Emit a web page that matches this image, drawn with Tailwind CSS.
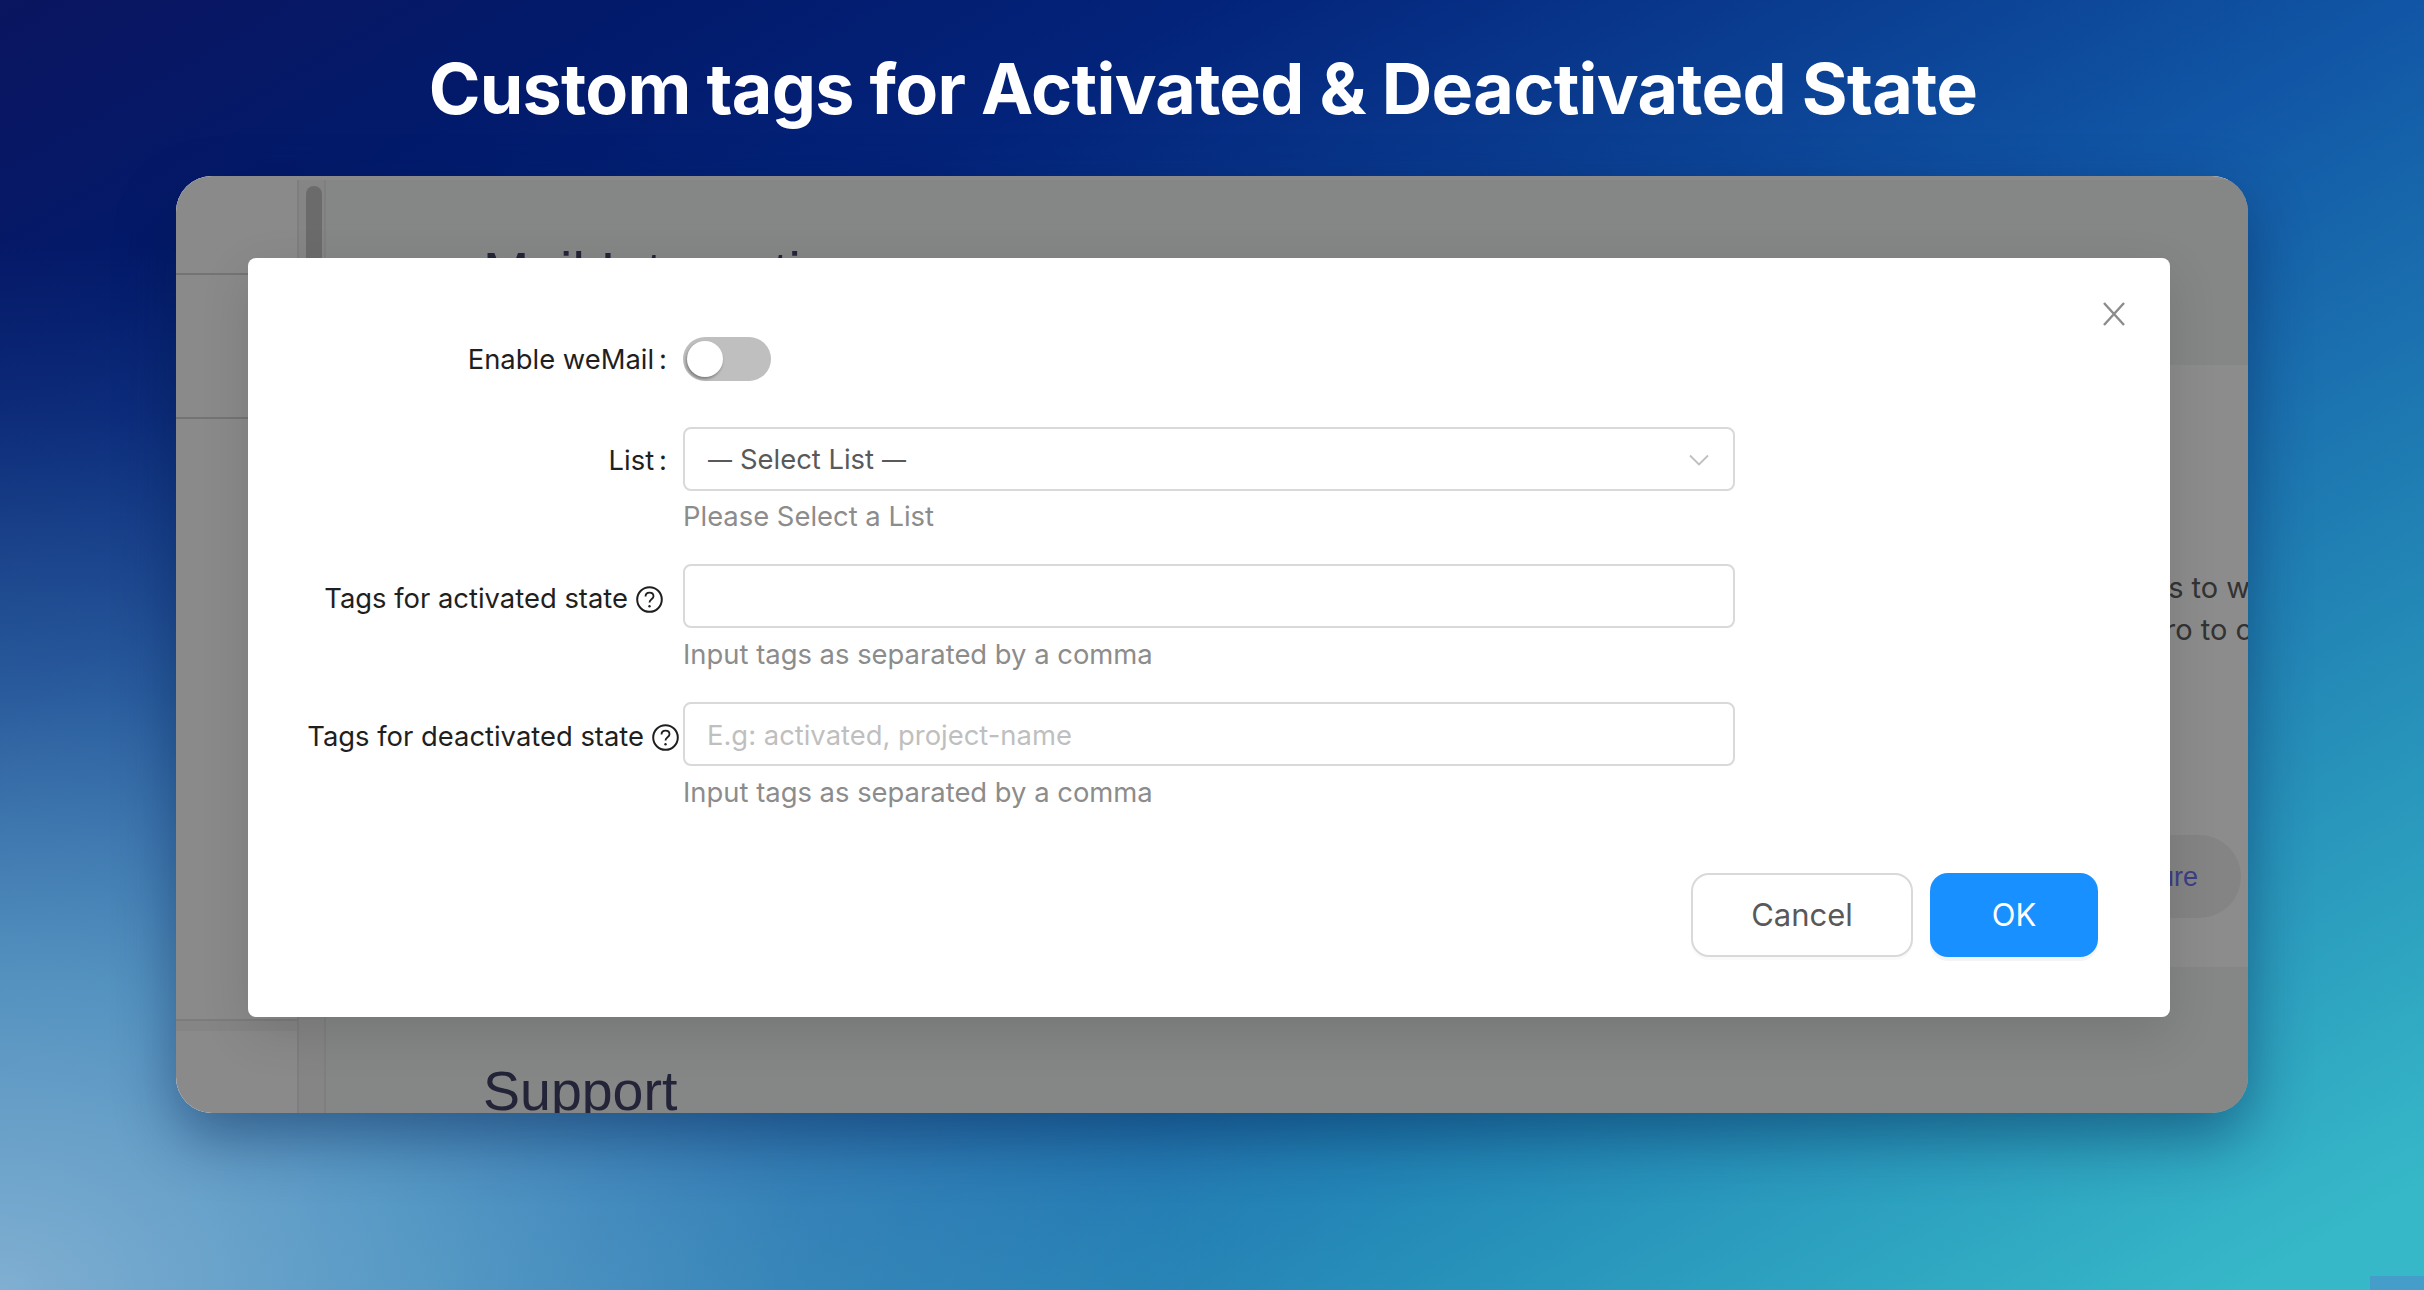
<!DOCTYPE html>
<html lang="en">
<head>
    <meta charset="UTF-8">
    <meta name="viewport" content="width=device-width, initial-scale=1.0">
    <title>Custom tags for Activated &amp; Deactivated State</title>
    <script src="https://cdn.jsdelivr.net/npm/@tailwindcss/browser@4"></script>
</head>
<body class="font-['Inter',sans-serif] overflow-hidden">
    <div class="relative w-[2424px] h-[1290px] overflow-hidden flex flex-col items-center bg-[radial-gradient(ellipse_1400px_1050px_at_0%_100%,rgba(134,180,212,0.95)_0%,rgba(105,170,205,0.78)_30%,rgba(85,155,195,0.45)_58%,rgba(70,130,185,0.15)_84%,rgba(70,130,185,0)_100%),linear-gradient(150deg,#0b1560_0%,#021a6b_14%,#03237a_26%,#1156a6_52%,#2387b6_74%,#36b8c8_96%)]">
        <h1 class="mt-[44px] mr-[18px] h-[90px] leading-[90px] text-[70px] font-bold text-white whitespace-nowrap tracking-[-0.72px]">Custom tags for Activated &amp; Deactivated State</h1>

        <!-- app window, dimmed by the modal mask -->
        <div class="relative mt-[42px] w-[2072px] h-[937px] rounded-[36px] bg-[#f3f4f5] overflow-hidden flex flex-col shadow-[0_24px_60px_rgba(0,25,70,0.45)]">
            <div class="h-[4px] shrink-0 bg-[#fbfbfb]"></div>
            <div class="flex-1 min-h-0 flex">
                <aside class="w-[123px] shrink-0 bg-[#fbfbfb] border-r-2 border-[#e6e6e6] flex flex-col">
                    <div class="h-[95px] border-b-2 border-[#d4d4d4]"></div>
                    <div class="h-[144px] border-b-2 border-[#d4d4d4]"></div>
                    <div class="flex-1"></div>
                    <div class="h-[94px] border-t-2 border-[#e2e2e2]"><div class="h-[10px] bg-[#f2f2f2]"></div></div>
                </aside>
                <div class="w-[27px] shrink-0 bg-[#f3f3f3] border-r-2 border-[#e8e8e8] pt-[6px] pl-[7px]">
                    <div class="w-[16px] h-[120px] rounded-full bg-[#c4c4c4]"></div>
                </div>
                <main class="flex-1 min-w-0 pl-[157px] pt-[57px] flex flex-col">
                    <h2 class="h-[70px] leading-[70px] text-[55.5px] font-['Liberation_Sans',sans-serif] text-[#434369] whitespace-nowrap">Mail Integration</h2>
                    <div class="mt-[58px] -ml-[1px] h-[602px] shrink-0 bg-white pt-[202px] text-[29px] leading-[42px] text-[#5d5d5d] whitespace-nowrap relative">
                        <p class="text-right mr-[-75px]">Add tags to subscribers to weMail</p>
                        <p class="text-right mr-[-128px]">Upgrade to Pro to customize</p>
                        <div class="absolute right-[7px] top-[470px] h-[83px] w-[200px] rounded-full bg-[#f1f1f3] flex items-center justify-end pr-[43px] font-['Liberation_Sans',sans-serif] text-[27px] text-[#6e72f0]">Configure</div>
                    </div>
                    <h2 class="mt-[89px] leading-[70px] text-[55.5px] font-['Liberation_Sans',sans-serif] text-[#434369]">Support</h2>
                </main>
            </div>
            <div class="absolute inset-0 bg-black/45"></div>
        </div>

        <!-- modal -->
        <div class="absolute left-[248px] top-[258px] w-[1922px] h-[759px] bg-white rounded-[8px] pt-[79px] pr-[72px] text-[27.4px] shadow-[0_16px_50px_rgba(0,0,0,0.12)]">
            <button class="absolute right-[45px] top-[44px] w-[22px] h-[24px] text-[#8c8c8c]">
                <svg viewBox="0 0 22 24" class="w-full h-full" fill="none" stroke="currentColor" stroke-width="2.4"><path d="M1 1L21 23M21 1L1 23"/></svg>
            </button>

            <div class="flex h-[44px] items-center">
                <label class="w-[420px] shrink-0 pr-[1px] mt-[1px] flex justify-end text-[#1f1f1f] whitespace-nowrap">Enable weMail<span class="ml-[5px]">:</span></label>
                <div class="ml-[15px] w-[88px] h-[44px] rounded-full bg-[#bfbfbf] p-[4px]">
                    <div class="w-[36px] h-[36px] rounded-full bg-white shadow-[-1px_2px_3px_rgba(0,0,0,0.35)]"></div>
                </div>
            </div>

            <div class="flex mt-[46px]">
                <label class="w-[420px] shrink-0 h-[64px] leading-[66px] pr-[1px] flex justify-end text-[#1f1f1f]">List<span class="ml-[5px]">:</span></label>
                <div class="ml-[15px] w-[1052px]">
                    <div class="h-[64px] border-2 border-[#d9d9d9] rounded-[8px] pl-[23px] pr-[24px] pt-[2px] flex items-center justify-between text-[#595959]">
                        <span class="flex items-center gap-[8px]"><span class="text-[24px]">—</span>Select List<span class="text-[24px]">—</span></span>
                        <svg viewBox="0 0 20 12" class="w-[20px] h-[12px]" fill="none" stroke="#bfbfbf" stroke-width="1.8"><path d="M1 1.5L10 10.5L19 1.5"/></svg>
                    </div>
                    <p class="mt-[7px] h-[36px] leading-[36px] text-[#8c8c8c]">Please Select a List</p>
                </div>
            </div>

            <div class="flex mt-[30px]">
                <div class="w-[420px] shrink-0 h-[64px] pt-[5px] flex items-center justify-end gap-[8px] pr-[5px] text-[#1f1f1f] whitespace-nowrap">
                    <label>Tags for activated state</label>
                    <svg viewBox="0 0 27 27" class="w-[27px] h-[27px] mt-[2px]" fill="none" stroke="#1f1f1f" stroke-width="2"><circle cx="13.5" cy="13.5" r="12.3"/><path d="M9.5 10.5c0-2.4 1.8-3.8 4-3.8s4 1.4 4 3.5c0 3-4 3.1-4 6.2" stroke-width="1.8"/><circle cx="13.5" cy="20.3" r="1.2" fill="#1f1f1f" stroke="none"/></svg>
                </div>
                <div class="ml-[15px] w-[1052px]">
                    <input type="text" class="block w-full h-[64px] border-2 border-[#d9d9d9] rounded-[8px] px-[22px] outline-none">
                    <p class="mt-[8px] h-[36px] leading-[36px] text-[#8c8c8c]">Input tags as separated by a comma</p>
                </div>
            </div>

            <div class="flex mt-[30px]">
                <div class="w-[431px] shrink-0 h-[64px] pt-[5px] flex items-center justify-end gap-[8px] text-[#1f1f1f] whitespace-nowrap">
                    <label>Tags for deactivated state</label>
                    <svg viewBox="0 0 27 27" class="w-[27px] h-[27px] mt-[2px]" fill="none" stroke="#1f1f1f" stroke-width="2"><circle cx="13.5" cy="13.5" r="12.3"/><path d="M9.5 10.5c0-2.4 1.8-3.8 4-3.8s4 1.4 4 3.5c0 3-4 3.1-4 6.2" stroke-width="1.8"/><circle cx="13.5" cy="20.3" r="1.2" fill="#1f1f1f" stroke="none"/></svg>
                </div>
                <div class="ml-[4px] w-[1052px]">
                    <input type="text" placeholder="E.g: activated, project-name" class="block w-full h-[64px] border-2 border-[#d9d9d9] rounded-[8px] px-[22px] pt-[2px] outline-none placeholder:text-[#bfbfbf]">
                    <p class="mt-[8px] h-[36px] leading-[36px] text-[#8c8c8c]">Input tags as separated by a comma</p>
                </div>
            </div>

            <div class="flex justify-end gap-[17px] mt-[63px] text-[31px]">
                <button class="w-[222px] h-[84px] rounded-[18px] border-2 border-[#d9d9d9] bg-white text-[#595959] shadow-[0_3px_0_rgba(0,0,0,0.02)]">Cancel</button>
                <button class="w-[168px] h-[84px] rounded-[18px] bg-[#1890ff] text-white shadow-[0_4px_0_rgba(0,0,0,0.045)]">OK</button>
            </div>
        </div>

        <div class="absolute right-0 bottom-0 w-[54px] h-[14px] bg-[#4b93cb]/70"></div>
    </div>
</body>
</html>
